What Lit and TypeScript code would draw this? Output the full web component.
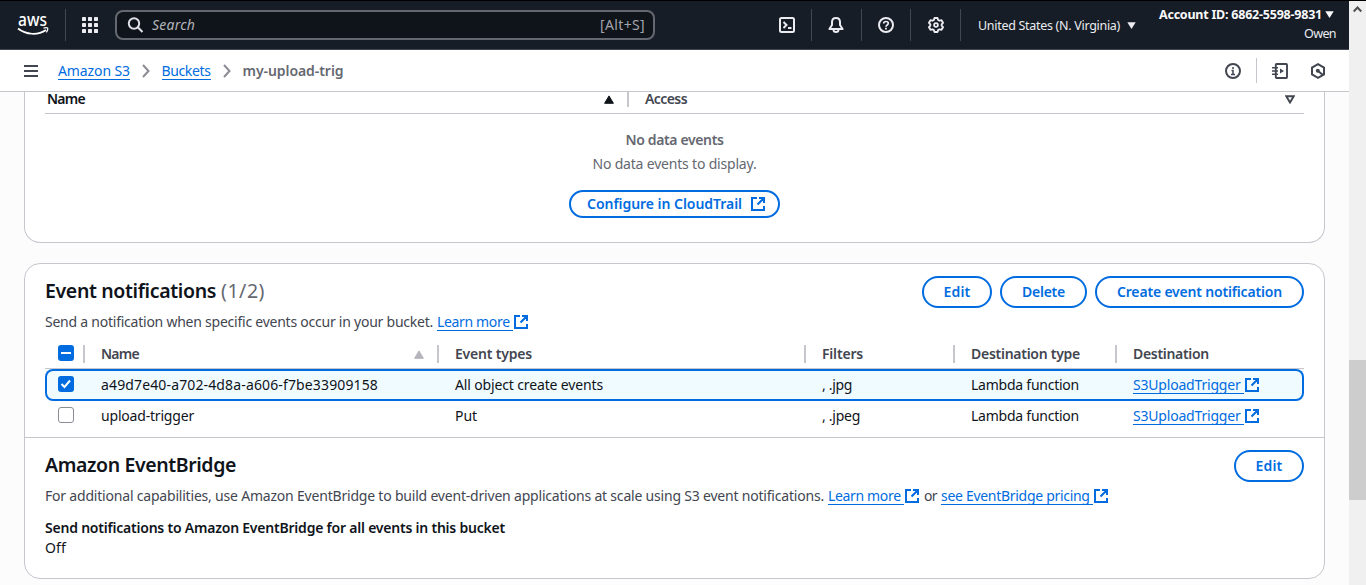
import { LitElement, html, css, svg } from "lit";
import { customElement, property } from "lit/decorators.js";

/** A run of text whose tracking is adjusted so that it spans a given width. */
@customElement("text-run")
class TextRun extends LitElement {
  @property({ type: Number }) width = 0;
  static styles = css`
    :host { display: inline-block; white-space: pre; }
  `;
  firstUpdated() {
    const chars = (this.textContent ?? "").length;
    const natural = this.getBoundingClientRect().width;
    if (this.width && chars) {
      this.style.letterSpacing = `${(this.width - natural) / chars}px`;
    }
  }
  render() {
    return html`<slot></slot>`;
  }
}

const t = (text: string, width: number, cls = "") =>
  html`<text-run class=${cls} width=${width}>${text}</text-run>`;

const stroke = (body: unknown, cls = "") =>
  html`<svg class="icon ${cls}" viewBox="0 0 16 16" width="16" height="16" fill="none" stroke="currentColor" stroke-width="2">${body}</svg>`;

const icons = {
  terminal: stroke(svg`<rect x="1" y="1" width="14" height="14" rx="1.5"/><path d="M4.500 5l3 3-3 3M9 11h3.500"/>`),
  bell: stroke(svg`<path stroke-linejoin="round" d="M8 1C5.500 1 4 2.800 4 5.200V8L1.400 12h13.200L12 8V5.200C12 2.800 10.500 1 8 1z"/><path d="M5.500 12.500c0 1.500 1 2.500 2.500 2.500s2.500-1 2.500-2.500"/>`),
  help: stroke(svg`<circle cx="8" cy="8" r="7"/><path stroke-width="1.700" d="M5.700 6.500C5.700 5.200 6.600 4.500 8 4.500s2.300.8 2.300 2C10.300 8 8 8 8 9.800"/><path stroke-width="1.800" d="M8 10.800v1.700"/>`),
  gear: stroke(svg`<path stroke-linejoin="round" stroke-width="1.900" d="M6.500 1h3l.6 1.900 1.400.8 2-.5L15 5.800 13.700 7.300v1.400L15 10.200l-1.500 2.600-2-.5-1.400.8L9.500 15h-3l-.6-1.900-1.400-.8-2 .5L1 10.200l1.300-1.500V7.300L1 5.800l1.500-2.600 2 .5 1.400-.8z"/><circle cx="8" cy="8" r="1.900" stroke-width="1.800"/>`),
  info: stroke(svg`<circle cx="8" cy="8" r="7"/><path d="M8 4v2M6.500 7.500H8V11M6 11.500h4" stroke-width="1.500"/>`),
  notebook: stroke(svg`<rect x="3.800" y="1" width="11.200" height="14" rx=".8" stroke-width="1.900"/><path stroke-width="1.500" d="M0 4.700h6M0 8h6M0 11.300h6"/><path d="M8 5.500v5L12 8z" fill="currentColor" stroke="none"/>`),
  hexagon: stroke(svg`<path d="M8 1.200l6 3.400v6.800l-6 3.400-6-3.400V4.600z"/><circle cx="7.800" cy="7.800" r="2" fill="currentColor" stroke="none"/><path d="M8 8l5 4"/>`),
  external: stroke(svg`<path d="M7 2H2v12h12v-4M9 2h5v5M14 2L7.500 8.500"/>`, "ext"),
  menu: stroke(svg`<path d="M1 3h14M1 8h14M1 13h14"/>`),
  chevron: html`<svg class="icon" width="8" height="14" viewBox="0 0 8 14" fill="none" stroke="#8c8c94" stroke-width="2"><path d="M1 1l5.500 6L1 13"/></svg>`,
};

const caret = html`<svg class="icon caret" width="9" height="7" viewBox="0 0 9 7"><path d="M.3.3h8.400L4.500 7z" fill="currentColor"/></svg>`;
const sortUp = html`<svg class="sort" width="10" height="9" viewBox="0 0 10 9"><path d="M5 .9L9.400 8.300H.6z" fill="currentColor" stroke="currentColor" stroke-linejoin="round"/></svg>`;

const rows = [
  { name: "a49d7e40-a702-4d8a-a606-f7be33909158", nameW: 277, types: "All object create events", typesW: 148, filter: ", .jpg", filterW: 30, selected: true },
  { name: "upload-trigger", nameW: 93, types: "Put", typesW: 22, filter: ", .jpeg", filterW: 38, selected: false },
];

@customElement("app-root")
class AppRoot extends LitElement {
  static styles = css`
    :host {
      display: block; height: 585px; overflow: hidden; background: #000;
      font: 14px/20px "Noto Sans", "Open Sans", sans-serif; color: #0f141a;
    }
    * { box-sizing: border-box; }
    svg { display: block; flex: none; }
    .frame { display: grid; grid-template-columns: 1349px 17px; height: 584px; margin-top: 1px; }
    :host::before { content: ""; display: block; height: 1px; margin-bottom: -1px; }
    .page { display: flex; flex-direction: column; min-width: 0; height: 584px; overflow: hidden; background: #fcfcfd; }

    .top { flex: none; height: 49px; display: flex; align-items: center; background: #161d26; color: #ebebf0; border-bottom: 1px solid #424650; padding: 0 13px 0 18px; }
    .logo { width: 31px; height: 24px; margin-top: -2px; overflow: visible; }
    .rule { width: 1px; height: 32px; background: #424650; flex: none; }
    .logo + .rule { margin-left: 16px; }
    .apps { margin: 0 17px 0 16px; }
    .search { width: 540px; height: 30px; border: 2px solid #656871; border-radius: 8px; background: #0f141a; display: flex; align-items: center; padding: 0 8px 0 11px; flex: none; color: #b4b4bb; }
    .search svg { margin-right: 8px; margin-left: -1px; width: 17px; color: #dedee3; }
    .hint { margin-left: auto; font-size: 14px; color: #a4a4ad; }
    .placeholder { font-style: italic; font-size: 14px; }
    .tools { display: flex; align-items: center; margin-left: 124px; gap: 16px; }
    .tools .near { margin-right: 1px; }
    .tools .wide { margin-left: 1px; }
    .region { display: flex; align-items: center; gap: 7px; font-size: 12.500px; margin-left: 1px; padding-top: 2px; }
    .region .caret { margin-bottom: 2px; }
    .account { margin-left: auto; display: flex; flex-direction: column; align-items: flex-end; font-size: 12.500px; line-height: 19px; padding-bottom: 2px; }
    .account div { display: flex; align-items: center; gap: 3px; padding-right: 2px; font-weight: 700; color: #f9f9fa; }
    .account .caret { margin-bottom: 1px; }

    .crumbs { flex: none; height: 42px; display: flex; align-items: center; background: #fff; border-bottom: 1px solid #c6c6cd; padding: 0 23px; color: #424650; }
    .crumbs > .link { padding-top: 1px; }
    .menu { margin-right: 19px; }
    .crumbs .sep { margin: 0 12px; }
    .crumbs .sep + .link { margin-left: -.5px; }
    .crumb-now { font-weight: 600; color: #656871; }
    .side { margin-left: auto; display: flex; align-items: center; }
    .side .rule { height: 25px; background: #c6c6cd; margin: 0 15px; }
    .side .icon + .icon { margin-left: 22px; }

    .link { color: #006ce0; text-decoration: none; border-bottom: 1px solid #006ce0; line-height: 16px; display: inline-block; }
    .bold { font-weight: 600; }
    .body { flex: 1; min-height: 0; padding: 0 24px; display: flex; flex-direction: column; gap: 20px; }
    .card { flex: none; background: #fff; border: 1px solid #c6c6cd; border-radius: 16px; }
    .card.cut { border-top: 0; border-radius: 0 0 16px 16px; padding: 0 20px 24px; height: 151px; }
    .cut-head { display: grid; grid-template-columns: 584px 1fr; height: 22px; padding-bottom: 6px; border-bottom: 1px solid #c6c6cd; line-height: 13px; font-weight: 600; }
    .cut-head > div { display: flex; align-items: center; justify-content: space-between; }
    .cut-head text-run { margin-bottom: 2px; }
    .cut-head .first { padding: 0 13px 0 2px; border-right: 2px solid #c6c6cd; }
    .cut-head .second { padding: 0 9px 0 16px; color: #424650; }
    .empty { display: flex; flex-direction: column; align-items: center; padding-top: 16px; color: #656871; }
    .empty .bold { margin-bottom: 4px; }
    .empty .btn { margin-top: 16px; height: 28px; }
    .btn { font: inherit; font-weight: 600; height: 32px; border: 2px solid #006ce0; border-radius: 20px; color: #006ce0; background: #fff; padding: 0; display: flex; align-items: center; justify-content: center; white-space: nowrap; }
    .btn.small { padding: 0 12px 0 16px; gap: 8px; width: 211px; }
    .w70 { width: 70px; } .w87 { width: 87px; } .w209 { width: 209px; }

    .section { padding: 12px 20px 0; }
    .head { display: flex; justify-content: space-between; height: 36px; }
    .title { font-size: 19.500px; line-height: 30px; font-weight: 600; }
    .count { font-weight: 400; color: #656871; margin-left: 5px; }
    .actions { display: flex; gap: 8px; }
    .desc { display: flex; align-items: center; height: 20px; color: #424650; }
    .desc .link { margin-left: 4px; }
    .ext { color: #006ce0; }
    .desc .or { margin-left: 4px; }
    .row { display: grid; grid-template-columns: 40px 354px 367px 149px 162px 1fr; align-items: center; height: 30px; }
    .row > * { display: flex; align-items: center; padding-left: 16px; }
    .row > :first-child { padding-left: 13px; padding-bottom: 2px; }
    .th { height: 29px; margin-top: 8px; border-bottom: 1px solid #c6c6cd; color: #424650; font-weight: 600; }
    .th > * { height: 18px; border-right: 2px solid #c6c6cd; }
    .th > :last-child { border-right: 0; }
    .th .sort { margin-left: auto; margin-right: 13px; color: #b4b4bb; }
    .row.selected { height: 32px; background: #f0fbff; box-shadow: inset 0 0 0 2px #006ce0; border-radius: 8px; }
    .box { width: 16px; height: 16px; border-radius: 3px; border: 1px solid #8c8c94; background: #fff; flex: none; display: block; }
    .divider { height: 1px; background: #c6c6cd; margin-top: 6px; }
    .field { margin-top: 12px; padding-bottom: 20px; display: flex; flex-direction: column; align-items: flex-start; }

    .bar { background: #f0f0f0; display: flex; flex-direction: column; }
    .up { margin: 5px 0 0 4px; }
    .thumb { background: #cdcdcd; height: 140px; margin-top: 347px; }
  `;

  check(kind: "some" | "on" | "off") {
    if (kind === "off") return html`<span class="box"></span>`;
    return html`<svg width="16" height="16" viewBox="0 0 16 16" fill="none" stroke="#fff" stroke-width="2">
      <rect width="16" height="16" rx="3" fill="#006ce0" stroke="none" />
      <path d=${kind === "some" ? "M3 8h10" : "M3.500 8l3 3L12 4.500"} />
    </svg>`;
  }

  dots() {
    const at = [0, 6, 12];
    return html`<svg class="apps" width="16" height="16" viewBox="0 0 16 16" fill="currentColor">
      ${at.map((y) => at.map((x) => svg`<rect x=${x} y=${y} width="4" height="4" rx=".4"/>`))}
    </svg>`;
  }

  topBar() {
    return html`<header class="top">
      <svg class="logo" viewBox="0 0 31 24" fill="none" stroke="#fff">
        <text x="0" y="14" textLength="29" lengthAdjust="spacingAndGlyphs" font-family="Noto Sans" font-weight="500" font-size="18" fill="#fff" stroke="none">aws</text>
        <path stroke-width="1.700" d="M0 16.500c8 6.500 20 7 28 1.500" />
        <path stroke-width="1.300" d="M25.500 16.100c2-.6 3.600-.6 4.200 0 .3 1-.2 2.700-1.300 4.200" />
      </svg>
      <span class="rule"></span>
      ${this.dots()}
      <div class="search">
        <svg width="16" height="16" viewBox="0 0 16 16" fill="none" stroke="currentColor" stroke-width="2"><circle cx="6.500" cy="6.500" r="5.200"/><path d="M10.300 10.300L15 15"/></svg>
        ${t("Search", 43, "placeholder")}${t("[Alt+S]", 45, "hint")}
      </div>
      <div class="tools">
        ${icons.terminal}<span class="rule"></span>${icons.bell}<span class="rule wide"></span>${icons.help}<span class="rule"></span><span class="wide">${icons.gear}</span><span class="rule"></span>
        <div class="region">${t("United States (N. Virginia)", 142)}${caret}</div>
      </div>
      <div class="account">
        <div>${t("Account ID: 6862-5598-9831", 163)}${caret}</div>
        ${t("Owen", 32)}
      </div>
    </header>`;
  }

  render() {
    return html`
      <div class="frame">
        <div class="page">
          ${this.topBar()}
          <nav class="crumbs">
            <span class="menu">${icons.menu}</span>
            <a class="link">${t("Amazon S3", 72)}</a><span class="sep">${icons.chevron}</span>
            <a class="link">${t("Buckets", 49)}</a><span class="sep">${icons.chevron}</span>
            ${t("my-upload-trig", 101, "crumb-now")}
            <div class="side">${icons.info}<span class="rule"></span>${icons.notebook}${icons.hexagon}</div>
          </nav>
          <main class="body">
            <section class="card cut">
              <div class="cut-head">
                <div class="first">${t("Name", 38)}${sortUp}</div>
                <div class="second">${t("Access", 42)}<svg width="10" height="9" viewBox="0 0 10 9"><path d="M1.300 1.300h7.400L5 7.500z" fill="none" stroke="currentColor" stroke-width="1.900"/></svg></div>
              </div>
              <div class="empty">
                ${t("No data events", 98, "bold")}
                ${t("No data events to display.", 164)}
                <button class="btn small">${t("Configure in CloudTrail", 155)}${icons.external}</button>
              </div>
            </section>

            <section class="card">
              <div class="section">
                <div class="head">
                  <div class="title">${t("Event notifications", 171)}${t("(1/2)", 44, "count")}</div>
                  <div class="actions">
                    <button class="btn w70">${t("Edit", 27)}</button>
                    <button class="btn w87">${t("Delete", 43)}</button>
                    <button class="btn w209">${t("Create event notification", 165)}</button>
                  </div>
                </div>
                <div class="desc">${t("Send a notification when specific events occur in your bucket.", 388)}<a class="link">${t("Learn more ", 76)}</a>${icons.external}</div>
                <div class="row th">
                  <div>${this.check("some")}</div>
                  <div>${t("Name", 38)}${sortUp}</div>
                  <div>${t("Event types", 77)}</div>
                  <div>${t("Filters", 41)}</div>
                  <div>${t("Destination type", 109)}</div>
                  <div>${t("Destination", 76)}</div>
                </div>
                ${rows.map((r) => html`<div class="row ${r.selected ? "selected" : ""}">
                  <div>${this.check(r.selected ? "on" : "off")}</div>
                  <div>${t(r.name, r.nameW)}</div>
                  <div>${t(r.types, r.typesW)}</div>
                  <div>${t(r.filter, r.filterW)}</div>
                  <div>${t("Lambda function", 108)}</div>
                  <div><a class="link">${t("S3UploadTrigger ", 111)}</a>${icons.external}</div>
                </div>`)}
              </div>
              <div class="divider"></div>
              <div class="section">
                <div class="head">
                  <div class="title">${t("Amazon EventBridge", 191)}</div>
                  <button class="btn w70">${t("Edit", 27)}</button>
                </div>
                <div class="desc">${t("For additional capabilities, use Amazon EventBridge to build event-driven applications at scale using S3 event notifications.", 779)}<a class="link">${t("Learn more ", 76)}</a>${icons.external}${t("or", 13, "or")}<a class="link">${t("see EventBridge pricing ", 152)}</a>${icons.external}</div>
                <div class="field">${t("Send notifications to Amazon EventBridge for all events in this bucket", 460, "bold")}${t("Off", 21)}</div>
              </div>
            </section>
          </main>
        </div>
        <div class="bar">
          <svg class="up" width="9" height="7" viewBox="0 0 9 7" fill="none" stroke="#505050" stroke-width="2"><path d="M.7 5.500l3.800-4 3.800 4"/></svg>
          <div class="thumb"></div>
        </div>
      </div>`;
  }
}
